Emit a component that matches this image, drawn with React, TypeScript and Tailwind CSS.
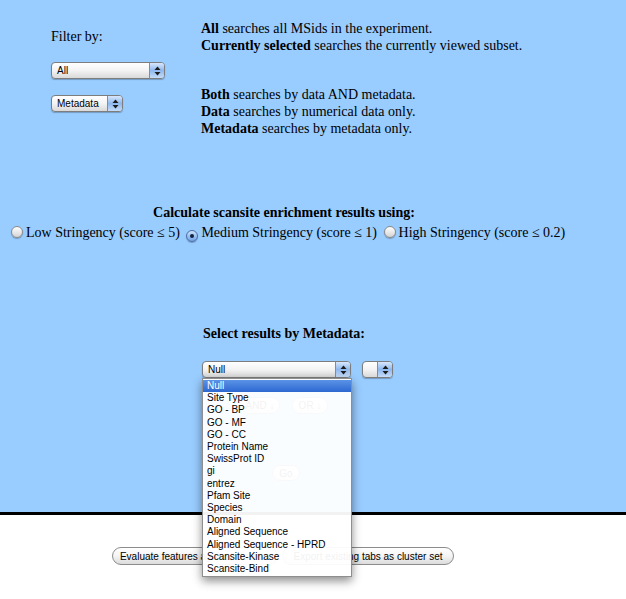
import React from 'react';

const serif = "font-['Liberation_Serif','Times_New_Roman',serif]";
const sans = "font-['Liberation_Sans',Arial,sans-serif]";

const metadataOptions = [
  'Null',
  'Site Type',
  'GO - BP',
  'GO - MF',
  'GO - CC',
  'Protein Name',
  'SwissProt ID',
  'gi',
  'entrez',
  'Pfam Site',
  'Species',
  'Domain',
  'Aligned Sequence',
  'Aligned Sequence - HPRD',
  'Scansite-Kinase',
  'Scansite-Bind',
];

const Arrows = () => (
  <svg width="7" height="10" viewBox="0 0 7 10">
    <path d="M3.5 0.5 L6.5 4 L0.5 4 Z" fill="#1b1b1b" />
    <path d="M3.5 9.5 L6.5 6 L0.5 6 Z" fill="#1b1b1b" />
  </svg>
);

const MacSelect = ({ label, className }: { label: string; className: string }) => (
  <div
    className={`flex h-[17px] items-stretch overflow-hidden rounded-[4px] border border-[#7d7d7d] bg-gradient-to-b from-white via-[#f3f3f3] to-[#d9d9d9] shadow-[0_1px_1px_rgba(0,0,0,0.25)] ${className}`}
  >
    <span className={`flex-1 pl-[5px] text-[10px] leading-[15px] text-black ${sans}`}>{label}</span>
    <span className="flex w-[15px] items-center justify-center border-l border-[#6f8fc0] bg-gradient-to-b from-[#d8e7fb] via-[#8fb8ee] to-[#c6dcf8]">
      <Arrows />
    </span>
  </div>
);

const Radio = ({ checked = false, className = '' }: { checked?: boolean; className?: string }) => (
  <span
    className={`mr-[3px] inline-flex h-[12px] w-[12px] items-center justify-center rounded-full border align-[-1px] shadow-[0_1px_1px_rgba(0,0,0,0.25)] ${className} ${
      checked
        ? 'border-[#4b6ea6] bg-gradient-to-b from-[#cfe2fb] to-[#6ea3e8]'
        : 'border-[#8a8a8a] bg-gradient-to-b from-white to-[#d4d4d4]'
    }`}
  >
    {checked && <span className="h-[4px] w-[4px] rounded-full bg-[#10233f]" />}
  </span>
);

const PillButton = ({ children, className }: { children: React.ReactNode; className: string }) => (
  <div
    className={`flex items-center justify-center whitespace-nowrap rounded-full border border-[#8c8c8c] bg-gradient-to-b from-white via-[#f4f4f4] to-[#dcdcdc] text-[10px] text-black ${sans} ${className}`}
  >
    {children}
  </div>
);

export default function App() {
  return (
    <div className="min-h-[599px] w-[626px] bg-white">
      {/* blue search panel */}
      <div className={`h-[515px] border-b-[3px] border-black bg-[#99ccff] pt-[20px] text-[14px] leading-[17px] text-black ${serif}`}>
        <div className="flex">
          <div className="w-[201px] pl-[51px]">
            <div className="mt-[8px]">Filter by:</div>
            <MacSelect label="All" className="mt-[17px] w-[114px]" />
            <MacSelect label="Metadata" className="mt-[16px] w-[72px]" />
          </div>
          <div>
            <p>
              <b>All</b> searches all MSids in the experiment.
            </p>
            <p>
              <b>Currently selected</b> searches the currently viewed subset.
            </p>
            <p className="mt-[32px]">
              <b>Both</b> searches by data AND metadata.
            </p>
            <p>
              <b>Data</b> searches by numerical data only.
            </p>
            <p>
              <b>Metadata</b> searches by metadata only.
            </p>
          </div>
        </div>

        <div className="mt-[67px] w-[568px] text-center font-bold">Calculate scansite enrichment results using:</div>
        <div className="mt-[3px] whitespace-nowrap pl-[11px]">
          <Radio />Low Stringency (score ≤ 5){' '}
          <Radio checked className="ml-[3px]" />Medium Stringency (score ≤ 1){' '}
          <Radio className="ml-[3px]" />High Stringency (score ≤ 0.2)
        </div>

        <div className="mt-[83px] w-[568px] text-center font-bold">Select results by Metadata:</div>

        <div className="mt-[19px] flex gap-[11px] pl-[202px]">
          <div className="relative">
            <MacSelect label="Null" className="w-[149px]" />
            {/* open option list */}
            <ul
              className={`absolute left-0 top-[17px] z-10 w-[150px] border border-[#8e8e8e] bg-white/95 py-[1px] text-[10px] leading-[12.2px] text-black shadow-[0_4px_9px_rgba(0,0,0,0.45)] ${sans}`}
            >
              {metadataOptions.map((opt, i) => (
                <li
                  key={opt}
                  className={`px-[4px] ${i === 0 ? 'bg-gradient-to-b from-[#5a93e6] to-[#2d68d2] text-white' : ''}`}
                >
                  {opt}
                </li>
              ))}
            </ul>
          </div>
          <MacSelect label="" className="w-[31px]" />
        </div>

        <div className="mt-[19px] flex gap-[12px] pl-[240px]">
          <PillButton className="h-[17px] w-[40px]">AND ↓</PillButton>
          <PillButton className="h-[17px] w-[36px]">OR ↓</PillButton>
        </div>
        <div className="mt-[51px] flex pl-[272px]">
          <PillButton className="h-[16px] w-[28px]">Go</PillButton>
        </div>
      </div>

      {/* action buttons */}
      <div className="mt-[32px] flex gap-[4px] pl-[112px]">
        <PillButton className="h-[18px] w-[166px]">Evaluate features against clusters</PillButton>
        <PillButton className="h-[18px] w-[172px]">Export existing tabs as cluster set</PillButton>
      </div>
    </div>
  );
}
